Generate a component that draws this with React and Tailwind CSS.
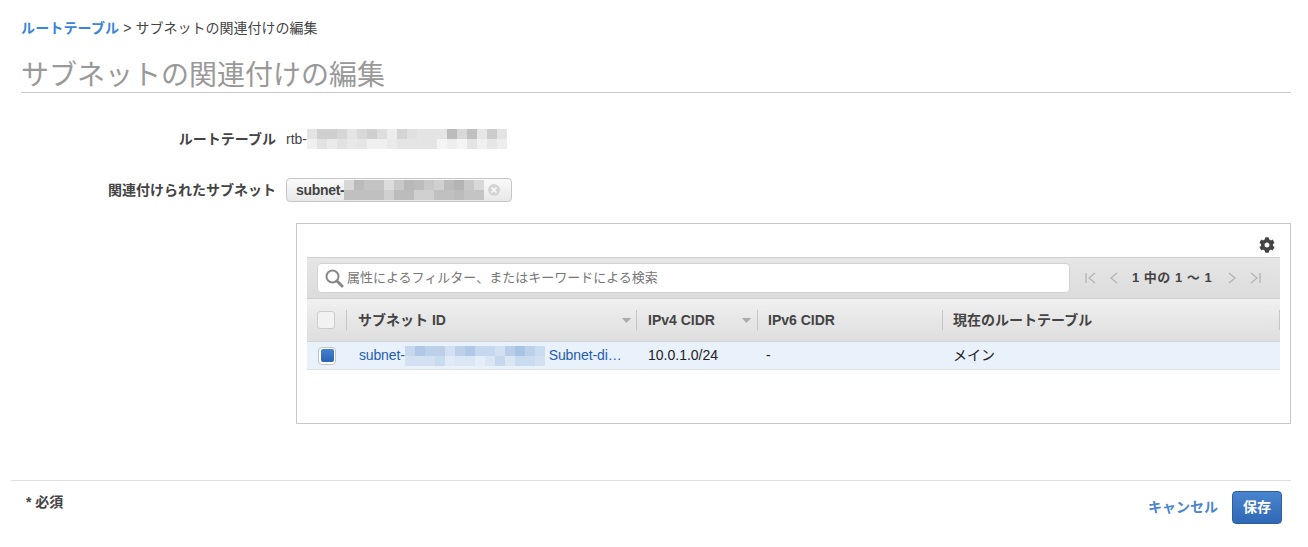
import React from 'react';
import { FaCog } from 'react-icons/fa';

const rtbTop = ['bg-[#e3e3e3]','bg-[#cfcfcf]','bg-[#cfcfcf]','bg-[#d6d6d6]','bg-[#e4e4e4]','bg-[#d8d8d8]','bg-[#cfcfcf]','bg-[#dedede]','bg-[#ececec]','bg-[#d4d4d4]','bg-[#e0e0e0]','bg-[#e4e4e4]','bg-[#e4e4e4]','bg-[#e4e4e4]','bg-[#bcbcbc]','bg-[#d8d8d8]','bg-[#c0c0c0]','bg-[#e6e6e6]','bg-[#cccccc]','bg-[#e4e4e4]'];
const rtbBottom = ['bg-[#f0f0f0]','bg-[#e2e2e2]','bg-[#eaeaea]','bg-[#e2e2e2]','bg-[#e8e8e8]','bg-[#e6e6e6]','bg-[#f0f0f0]','bg-[#f0f0f0]','bg-[#eaeaea]','bg-[#e4e4e4]','bg-[#e4e4e4]','bg-[#e4e4e4]','bg-[#e4e4e4]','bg-[#f4f4f4]','bg-[#eeeeee]','bg-[#f4f4f4]','bg-[#e4e4e4]','bg-[#f0f0f0]','bg-[#e6e6e6]','bg-[#eeeeee]'];
const chipTop = ['bg-[#d8d8d8]','bg-[#bbbbbb]','bg-[#c4c4c4]','bg-[#c4c4c4]','bg-[#dcdcdc]','bg-[#c8c8c8]','bg-[#b8b8b8]','bg-[#bcbcbc]','bg-[#c8c8c8]','bg-[#d0d0d0]','bg-[#bcbcbc]','bg-[#b4b4b4]','bg-[#c8c8c8]','bg-[#d8d8d8]'];
const chipBottom = ['bg-[#c0c0c0]','bg-[#c0c0c0]','bg-[#c0c0c0]','bg-[#c0c0c0]','bg-[#d0d0d0]','bg-[#bcbcbc]','bg-[#bcbcbc]','bg-[#d0d0d0]','bg-[#d0d0d0]','bg-[#c0c0c0]','bg-[#c0c0c0]','bg-[#bcbcbc]','bg-[#c4c4c4]','bg-[#c4c4c4]'];
const rowTop = ['bg-[#c5d8ee]','bg-[#b0c8e6]','bg-[#bcd0ea]','bg-[#bcd0ea]','bg-[#d2e0f2]','bg-[#bcd0ea]','bg-[#b0c8e6]','bg-[#c5d8ee]','bg-[#c5d8ee]','bg-[#d2e0f2]','bg-[#b8cee8]','bg-[#a8c4e4]','bg-[#bcd0ea]','bg-[#c8dbef]'];
const rowBottom = ['bg-[#d2e0f2]','bg-[#d2e0f2]','bg-[#d2e0f2]','bg-[#c8dbef]','bg-[#e0eaf6]','bg-[#dbe6f4]','bg-[#dbe6f4]','bg-[#e4edf8]','bg-[#dbe6f4]','bg-[#c5d8ee]','bg-[#dbe6f4]','bg-[#c8dbef]','bg-[#c8dbef]','bg-[#d2e0f2]'];

const Mosaic = ({ top, bottom }) => (
  <div className="flex flex-col shrink-0">
    {[top, bottom].map((cells, r) => (
      <div key={r} className="flex">
        {cells.map((c, i) => (
          <div key={i} className={`w-[10px] h-[10px] ${c}`} />
        ))}
      </div>
    ))}
  </div>
);

const Sep = () => <div className="w-px h-[20px] bg-[#c6c6c6] shrink-0" />;

const SortCaret = () => (
  <svg width="9" height="5" viewBox="0 0 9 5" className="shrink-0">
    <path d="M0 0h9L4.5 5z" fill="#aaaaaa" />
  </svg>
);

const PagerIcon = ({ d }) => (
  <svg width="14" height="14" viewBox="0 0 14 14" fill="none" stroke="#b4b4b4" strokeWidth="1.3" className="shrink-0">
    <path d={d} />
  </svg>
);

export default function App() {
  return (
    <div className="w-[1308px] h-[547px] overflow-hidden bg-white text-[#444] font-['Liberation_Sans','Noto_Sans_CJK_JP',sans-serif]">
      <div className="pl-[21px] pr-[17px] pt-[18px]">
        {/* breadcrumb */}
        <div className="flex items-center h-[20px] text-[14px] leading-[20px]">
          <span className="text-[#3a85d8] font-bold tracking-[0.15px]">ルートテーブル</span>
          <span className="ml-[4px] mr-[4px] text-[#444]">&gt;</span>
          <span className="text-[#444]">サブネットの関連付けの編集</span>
        </div>
        <h1 className="mt-[8px] h-[47px] pt-[15px] text-[28px] leading-[30px] font-normal text-[#999] border-b border-[#c8c8c8]">
          サブネットの関連付けの編集
        </h1>
      </div>

      {/* form rows */}
      <div className="mt-[27px] flex items-center h-[38px]">
        <div className="w-[276px] text-right text-[14px] font-bold text-[#444]">ルートテーブル</div>
        <div className="ml-[10px] flex items-center text-[14px] text-[#444]">
          <span>rtb-</span>
          <Mosaic top={rtbTop} bottom={rtbBottom} />
        </div>
      </div>
      <div className="mt-[19px] flex items-center h-[26px]">
        <div className="w-[276px] text-right text-[14px] font-bold text-[#444]">関連付けられたサブネット</div>
        <div className="ml-[10px] w-[226px] h-[24px] pl-[9px] flex items-center rounded-[4px] border border-[#c6c6c6] bg-gradient-to-b from-[#fafafa] to-[#e8e8e8] text-[14px] font-bold text-[#444]">
          <span className="tracking-[-0.3px]">subnet-</span>
          <Mosaic top={chipTop} bottom={chipBottom} />
          <div className="ml-[4px] w-[12px] h-[12px] rounded-full bg-[#d4d4d4] flex items-center justify-center">
            <svg width="6" height="6" viewBox="0 0 6 6" stroke="#ffffff" strokeWidth="1.4">
              <path d="M0.5 0.5l5 5M5.5 0.5l-5 5" />
            </svg>
          </div>
        </div>
      </div>

      {/* table panel */}
      <div className="ml-[296px] mt-[20px] w-[995px] h-[201px] border border-[#c8c8c8] px-[10px]">
        <div className="h-[33px] flex items-end justify-end pb-[4px] pr-[5px]">
          <FaCog className="w-[16px] h-[16px] text-[#444]" />
        </div>
        <div className="w-[973px] h-[42px] flex items-center pl-[10px] border-t border-b border-[#d0d0d0] bg-gradient-to-b from-[#e6e6e6] to-[#dcdcdc]">
          <div className="w-[753px] h-[30px] flex items-center pl-[6px] gap-[3px] bg-white border border-[#d2d2d2] rounded-[4px] text-[13px] text-[#777]">
            <svg width="20" height="20" viewBox="0 0 20 20" fill="none" stroke="#888" className="shrink-0">
              <circle cx="8.5" cy="8.5" r="6" strokeWidth="2" />
              <path d="M13 13l5 5" strokeWidth="3" strokeLinecap="round" />
            </svg>
            <span>属性によるフィルター、またはキーワードによる検索</span>
          </div>
          <div className="ml-[14px] flex items-center">
            <PagerIcon d="M2 2v10M11 2L5 7l6 5" />
            <div className="w-[9px]" />
            <PagerIcon d="M10 2L4 7l6 5" />
            <span className="ml-[11px] mr-[13px] text-[13px] font-bold text-[#444] whitespace-nowrap tracking-[0.5px]">1 中の 1 ～ 1</span>
            <PagerIcon d="M4 2l6 5-6 5" />
            <div className="w-[9px]" />
            <PagerIcon d="M3 2l6 5-6 5M12 2v10" />
          </div>
        </div>
        {/* header */}
        <div className="w-[973px] h-[43px] flex items-center border-b border-[#cfd3d8] bg-gradient-to-b from-[#f0f0f0] to-[#dedede] text-[14px] font-bold text-[#444]">
          <div className="w-[39px] pl-[10px] shrink-0">
            <div className="w-[18px] h-[18px] rounded-[3px] border border-[#cccccc] bg-[#f2f2f2]" />
          </div>
          <Sep />
          <div className="w-[289px] pl-[11px] pr-[5px] flex items-center justify-between shrink-0">
            <span>サブネット ID</span>
            <SortCaret />
          </div>
          <Sep />
          <div className="w-[120px] pl-[11px] pr-[6px] flex items-center justify-between shrink-0">
            <span>IPv4 CIDR</span>
            <SortCaret />
          </div>
          <Sep />
          <div className="w-[184px] pl-[10px] shrink-0">IPv6 CIDR</div>
          <Sep />
          <div className="w-[336px] pl-[10px] shrink-0">現在のルートテーブル</div>
          <Sep />
        </div>
        {/* row */}
        <div className="w-[973px] h-[28px] flex items-center border-b border-[#dfe3e8] bg-[#e9f1fb] text-[14px] text-[#222]">
          <div className="w-[52px] pl-[11px] shrink-0">
            <div className="w-[18px] h-[18px] rounded-[4px] border border-[#c4c4c4] bg-white flex items-center justify-center">
              <div className="w-[13px] h-[13px] rounded-[2px] bg-gradient-to-b from-[#4380d0] to-[#2a63b4]" />
            </div>
          </div>
          <div className="w-[279px] flex items-center shrink-0 text-[#1f5db0]">
            <span className="tracking-[-0.15px]">subnet-</span>
            <Mosaic top={rowTop} bottom={rowBottom} />
            <span className="ml-[4px] tracking-[-0.1px]">Subnet-di…</span>
          </div>
          <div className="w-[120px] pl-[10px] shrink-0">10.0.1.0/24</div>
          <div className="w-[184px] pl-[8px] shrink-0">-</div>
          <div className="pl-[11px]">メイン</div>
        </div>
      </div>

      {/* footer */}
      <div className="ml-[11px] mt-[56px] w-[1280px] border-t border-[#dfdfdf] flex justify-between">
        <div className="ml-[15px] mt-[11px] text-[14px] font-bold text-[#444]">* 必須</div>
        <div className="mt-[10px] mr-[9px] flex items-center">
          <span className="text-[14px] font-bold text-[#4a86d0]">キャンセル</span>
          <button className="ml-[14px] w-[50px] h-[33px] rounded-[4px] border border-[#2d5f9f] bg-gradient-to-b from-[#4a84cf] to-[#2f68b4] text-[14px] font-bold text-white">
            保存
          </button>
        </div>
      </div>
    </div>
  );
}
